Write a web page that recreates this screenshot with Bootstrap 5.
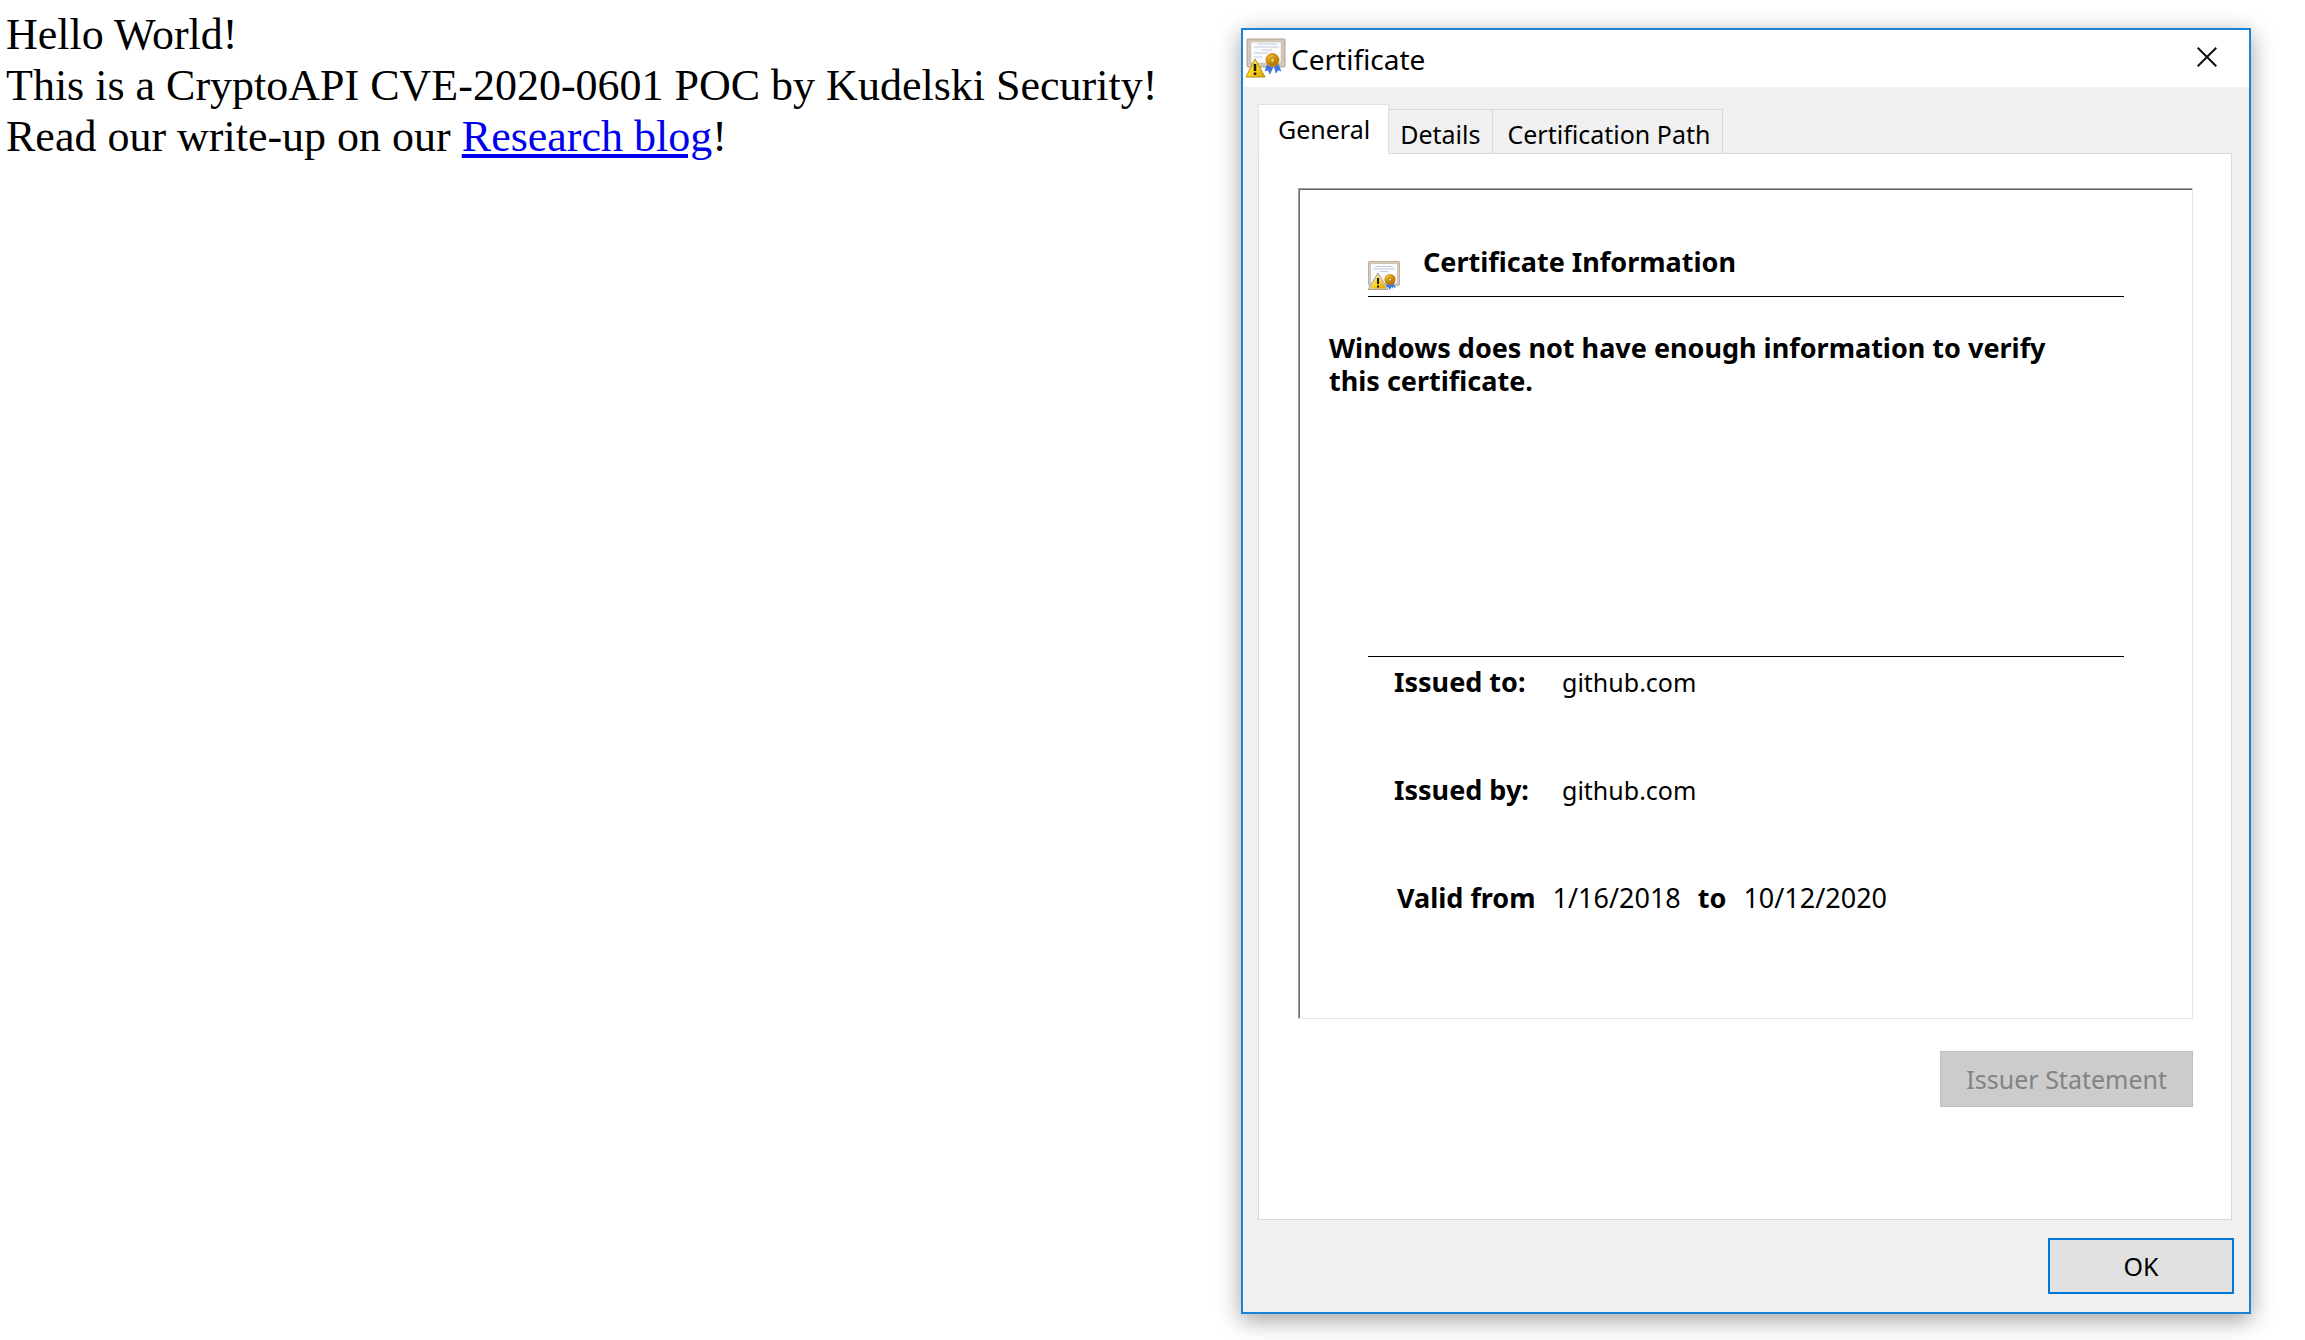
<!DOCTYPE html>
<html lang="en">
<head>
<meta charset="utf-8">
<meta name="viewport" content="width=device-width, initial-scale=1">
<title>CVE-2020-0601 POC</title>
<link href="https://cdn.jsdelivr.net/npm/bootstrap@5.3.0/dist/css/bootstrap.min.css" rel="stylesheet">
<style>
  body { background: #fff; color: #000; }
  .page-copy { flex: 0 1 1241px; padding: 9px 6px; font: 44px/51px "Liberation Serif", "Times New Roman", serif; }
  .page-copy a { color: #00e; text-decoration: underline; }
  .cert-dialog { flex: 1 1 0; min-width: 800px; margin: 28px 54px 27px 0; border: 2px solid #1883d7; background: #f0f0f0;
    box-shadow: 0 6px 22px rgba(0,0,0,.38); font: 25px/33px "Noto Sans", Tahoma, sans-serif; }
  .cert-titlebar { background: #fff; height: 57px; padding: 0 32px 0 2px; gap: 5px; }
  .cert-titlebar svg { flex: none; }
  .cert-titlebar h1 { font-size: 28px; line-height: 33px; margin: 1px 0 0; font-weight: 400; }
  .cert-close { border: 0; background: none; padding: 0 0 3px; line-height: 0; }
  .cert-tabs { padding: 17px 15px 0; border: 0; }
  .cert-tabs .nav-link { border: 1px solid #d9d9d9; border-left-width: 0; border-bottom: 0; border-radius: 0; margin: 0;
    background: #f0f0f0; color: #000; height: 44px; padding: 5px 12px 0 14px; line-height: 33px; }
  .cert-tabs .nav-link.active { background: #fff; border-left-width: 1px; height: 50px; padding: 5px 18px 6px 19px;
    margin: 0 -3px -1px 0; position: relative; z-index: 1; }
  .cert-pane { margin: 0 17px 0 15px; border: 1px solid #d9d9d9; background: #fff; padding: 34px 38px 112px 39px; }
  .cert-frame { border: 1px solid #e3e3e3; border-top-color: #a0a0a0; border-left-color: #a0a0a0;
    box-shadow: inset 1px 1px #696969; padding: 56px 68px 104px 69px; margin-bottom: 32px; }
  .cert-head { border-bottom: 1px solid #000; height: 52px; gap: 23px; }
  .cert-head h2, .cert-message { font-size: 27px; line-height: 33px; font-weight: 700; margin: 0; }
  .cert-head svg { margin-bottom: 6px; }
  .cert-message { margin: 34px 0 0 -39px; min-height: 325px; max-width: 760px; }
  .cert-facts { border-top: 1px solid #000; padding: 8px 26px 0; margin: 0; }
  .cert-row { margin-bottom: 75px; height: 33px; }
  .cert-row:last-child { margin-bottom: 0; padding-left: 3px; gap: 17px; }
  .cert-row dt, .cert-row dd { margin: 0; font-weight: 400; }
  .cert-row dt { font-size: 27px; font-weight: 700; }
  .cert-row .cert-date { font-size: 27px; }
  .cert-label { width: 168px; }
  .cert-btn { border-radius: 0; font-size: 25px; line-height: 33px; height: 56px; padding: 0 25px; }
  .cert-btn:disabled { background: #ccc; border: 1px solid #bfbfbf; color: #838383; opacity: 1; }
  .cert-ok { background: #e1e1e1; border: 2px solid #0078d7; color: #000; min-width: 186px; }
  .cert-foot { padding: 18px 15px; }
</style>
<script src="https://cdn.jsdelivr.net/npm/bootstrap@5.3.0/dist/js/bootstrap.bundle.min.js"></script>
</head>
<body>
<svg width="0" height="0" class="position-absolute" aria-hidden="true">
  <defs>
    <linearGradient id="warn" x1="0" y1="0" x2="1" y2="1"><stop offset="0" stop-color="#fff27a"/><stop offset=".55" stop-color="#fbd21c"/><stop offset="1" stop-color="#d99a00"/></linearGradient>
    <radialGradient id="gold" cx=".4" cy=".35"><stop offset="0" stop-color="#f7cf52"/><stop offset=".6" stop-color="#dc9c14"/><stop offset="1" stop-color="#b87808"/></radialGradient>
  </defs>
</svg>
<div class="d-flex align-items-start">
  <main class="page-copy">
    Hello World!<br>
    This is a CryptoAPI CVE-2020-0601 POC by Kudelski Security!<br>
    Read our write-up on our <a href="#">Research blog</a>!
  </main>

  <section class="cert-dialog" role="dialog" aria-labelledby="dlg-title">
    <header class="cert-titlebar d-flex align-items-center">
      <svg width="41" height="41" viewBox="0 0 41 41" aria-hidden="true">
        <rect x="2" y="1" width="38" height="28" rx="1" fill="#cfc2b2" stroke="#b3a594"/>
        <rect x="4" y="3" width="34" height="24" fill="none" stroke="#e3d9cc" stroke-dasharray="1 1"/>
        <rect x="6" y="4" width="30" height="21" fill="#fafbfd" stroke="#c9c0b5" stroke-width=".5"/>
        <path d="M12 6h20M9 9h25M17 12h10M9 15h14M9 19h8" stroke="#c5c9df" stroke-width="1"/>
        <path d="M22 27l-2 6 3-1 2 4 3-7zM29 28l2 7 2-3 3 1-3-7z" fill="#3b78e7" stroke="#2a5fc4" stroke-width=".5"/>
        <circle cx="27.500" cy="22" r="6.500" fill="url(#gold)" stroke="#cf9420"/>
        <circle cx="27.500" cy="22" r="2.500" fill="#f3c84c" stroke="#a86d08"/>
        <path d="M10 21L1 39h19z" fill="url(#warn)" stroke="#b48d14" stroke-linejoin="round"/>
        <path d="M10 26v7M10 34.500v2.500" stroke="#1c1a08" stroke-width="2.500"/>
      </svg>
      <h1 id="dlg-title">Certificate</h1>
      <button type="button" class="cert-close ms-auto" aria-label="Close">
        <svg width="20" height="20" viewBox="0 0 20 20"><path d="M.7.7l18.600 18.600M19.300.7L.7 19.300" stroke="#111" stroke-width="2"/></svg>
      </button>
    </header>

    <div class="nav nav-tabs cert-tabs align-items-end" role="tablist">
      <button class="nav-link active" id="tab-general" role="tab" type="button" aria-selected="true" aria-controls="pane-general">General</button>
      <button class="nav-link" role="tab" type="button" aria-selected="false">Details</button>
      <button class="nav-link" role="tab" type="button" aria-selected="false">Certification Path</button>
    </div>

    <div class="cert-pane" id="pane-general" role="tabpanel" aria-labelledby="tab-general">
      <div class="cert-frame">
        <div class="cert-head d-flex">
          <svg class="align-self-end" width="32" height="29" viewBox="0 0 32 29" aria-hidden="true">
            <rect x=".5" y=".5" width="31" height="24" rx="1" fill="#cfc2b2" stroke="#bcae9d"/>
            <rect x="1.500" y="1.500" width="29" height="22" fill="none" stroke="#e3d9cc" stroke-dasharray="1 1"/>
            <rect x="3" y="3" width="26" height="19" fill="#fafbfd"/>
            <path d="M7 5.500h18M5 8h22M12 10.500h8" stroke="#c5c9df"/>
            <path d="M19 22l-1 5 2-1 2 3 2-5zM23 23l1 5 1-2 3 1-3-5z" fill="#3b78e7"/>
            <circle cx="22" cy="18.500" r="5.500" fill="url(#gold)"/>
            <circle cx="22" cy="18.500" r="2" fill="#f3c84c" stroke="#a86d08"/>
            <path d="M10 12L0 28.500h20z" fill="#d5d2c8" stroke="#aaa69a"/>
            <path d="M10 14L2 27.500h16z" fill="url(#warn)"/>
            <path d="M10 17v6M10 24.500v2" stroke="#1c1a08" stroke-width="2"/>
          </svg>
          <h2>Certificate Information</h2>
        </div>
        <p class="cert-message">Windows does not have enough information to verify this certificate.</p>
        <dl class="cert-facts">
          <div class="cert-row d-flex align-items-baseline"><dt class="cert-label">Issued to:</dt><dd>github.com</dd></div>
          <div class="cert-row d-flex align-items-baseline"><dt class="cert-label">Issued by:</dt><dd>github.com</dd></div>
          <div class="cert-row d-flex align-items-baseline"><dt>Valid from</dt><dd class="cert-date">1/16/2018</dd><dt>to</dt><dd class="cert-date">10/12/2020</dd></div>
        </dl>
      </div>
      <div class="d-flex justify-content-end">
        <button type="button" class="btn cert-btn" disabled>Issuer Statement</button>
      </div>
    </div>

    <footer class="cert-foot d-flex justify-content-end">
      <button type="button" class="btn cert-btn cert-ok">OK</button>
    </footer>
  </section>
</div>
</body>
</html>
